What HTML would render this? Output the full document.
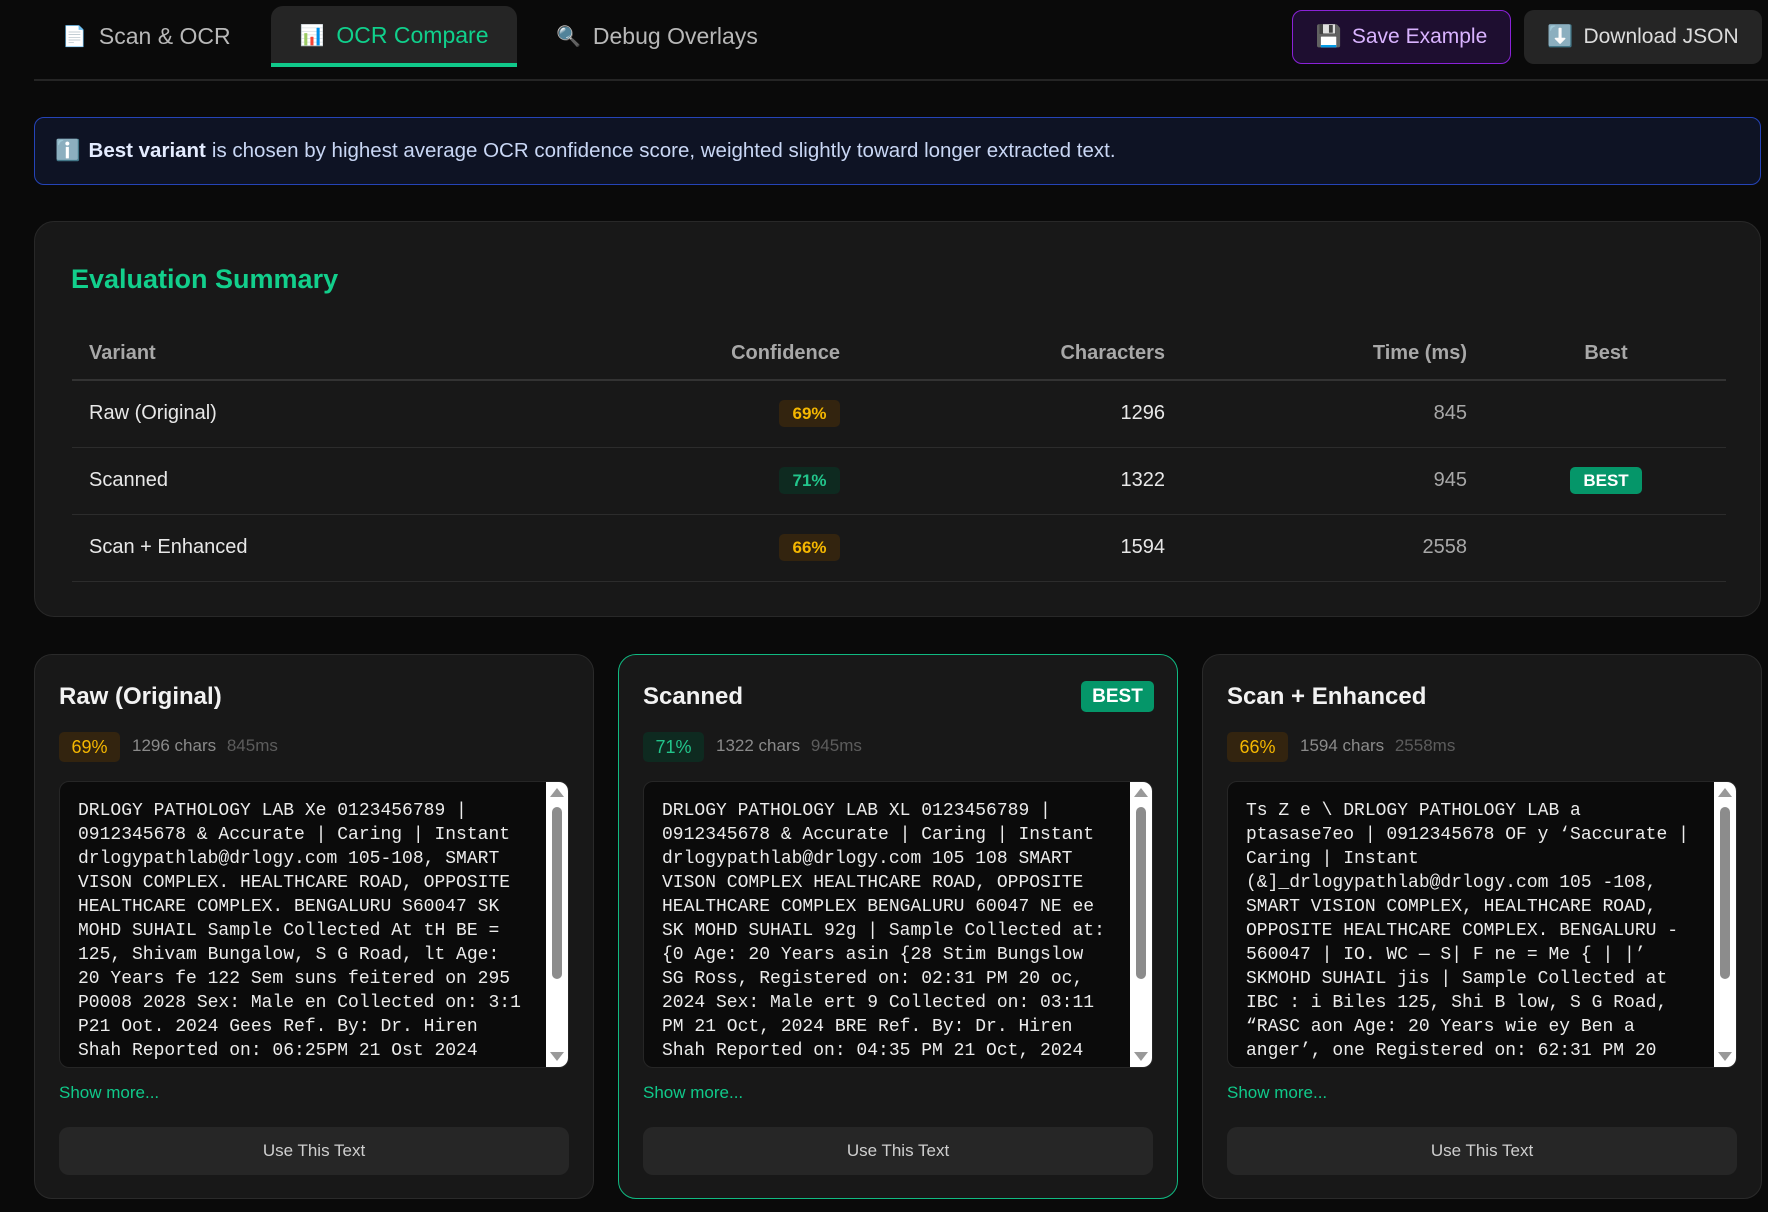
<!DOCTYPE html>
<html><head><meta charset="utf-8"><style>
*{box-sizing:border-box;margin:0;padding:0}
body{width:1768px;height:1212px;background:#0a0a0a;font-family:"Liberation Sans",sans-serif;color:#e5e5e5;position:relative;overflow:hidden}
.abs{position:absolute}
.tab{position:absolute;top:6px;height:61px;display:flex;align-items:center;font-size:23px;color:#b8b8b8}
.tab .ic{margin-right:12px;font-size:20px}
.btn{position:absolute;top:10px;height:54px;border-radius:10px;display:flex;align-items:center;justify-content:center;font-size:21px}
.card{position:absolute;top:654px;width:560px;height:545px;background:#181818;border:1px solid #2a2a2a;border-radius:18px}
.card.best{border-color:#10b981}
.ct{position:absolute;left:24px;top:28px;font-size:24px;font-weight:bold;color:#f2f2f2}
.pct{position:absolute;left:24px;top:77px;width:61px;height:30px;border-radius:5px;font-size:18px;display:flex;align-items:center;justify-content:center}
.amb{background:#33240f;color:#f5b700}
.grn{background:#0e2a20;color:#22c58b}
.meta{position:absolute;left:97px;top:81px;font-size:17px;color:#8a8a8a}
.meta span{color:#5c5c5c;margin-left:6px}
.ta{position:absolute;left:24px;top:126px;width:510px;height:287px;background:#0b0b0b;border:1px solid #262626;border-radius:10px;overflow:hidden}
.ta pre{position:absolute;left:18px;top:17px;font-family:"Liberation Mono",monospace;font-size:18px;line-height:24px;color:#ececec;white-space:pre}
.sb{position:absolute;right:0;top:0;width:22px;height:100%;background:#fff}
.sb .th{position:absolute;left:6px;top:25px;width:10px;height:172px;background:#8c8c8c;border-radius:5px}
.sb .up,.sb .dn{position:absolute;left:4px;width:0;height:0;border-left:7px solid transparent;border-right:7px solid transparent}
.sb .up{top:6px;border-bottom:9px solid #999}
.sb .dn{bottom:6px;border-top:9px solid #999}
.sm{position:absolute;left:24px;top:428px;font-size:17px;color:#10c98a}
.use{position:absolute;left:24px;top:472px;width:510px;height:48px;background:#262626;border-radius:10px;display:flex;align-items:center;justify-content:center;font-size:17px;color:#cfcfcf}
.bestb{background:#059669;color:#fff;font-weight:bold;border-radius:5px;display:flex;align-items:center;justify-content:center}
table{position:absolute;left:37px;top:106px;width:1654px;border-collapse:collapse;font-size:20px;table-layout:fixed}
th{height:52px;color:#a8a8a8;font-weight:bold;border-bottom:2px solid #333;text-align:right;padding-right:19px}
td{height:67px;border-bottom:1px solid #2c2c2c;text-align:right;color:#e8e8e8;padding-right:19px}
.tp{display:inline-block;width:61px;height:27px;line-height:27px;border-radius:5px;font-size:17px;font-weight:bold;text-align:center}
</style></head><body>

<div class="tab" style="left:62px"><span class="ic">📄</span>Scan &amp; OCR</div>
<div class="tab" style="left:271px;width:246px;background:#252525;border-radius:12px 12px 0 0;color:#10d08c;justify-content:center;border-bottom:4px solid #10c98a;padding-top:2px"><span class="ic">📊</span>OCR Compare</div>
<div class="tab" style="left:556px"><span class="ic">🔍</span>Debug Overlays</div>
<div class="abs" style="left:34px;top:79px;width:1734px;height:2px;background:#252525"></div>

<div class="btn" style="left:1292px;width:219px;background:#1e0e30;border:1.5px solid #8a22d8;color:#d9b3ff"><span style="margin-right:10px">💾</span>Save Example</div>
<div class="btn" style="left:1524px;width:238px;background:#252525;color:#dcdcdc"><span style="margin-right:10px">⬇️</span>Download JSON</div>

<div class="abs" style="left:34px;top:117px;width:1727px;height:68px;background:#0e1324;border:1.5px solid #2544b8;border-radius:10px;display:flex;align-items:center;padding-left:20px;font-size:20.5px;color:#c9d7f5"><span style="margin-right:8px">ℹ️</span><b style="color:#e4ecff;margin-right:6px">Best variant</b> is chosen by highest average OCR confidence score, weighted slightly toward longer extracted text.</div>

<div class="abs" style="left:34px;top:221px;width:1727px;height:396px;background:#181818;border:1px solid #282828;border-radius:20px">
<div class="abs" style="left:36px;top:42px;font-size:27px;font-weight:bold;color:#12cf8c">Evaluation Summary</div>
<table>
<colgroup><col style="width:640px"><col style="width:147px"><col style="width:325px"><col style="width:302px"><col style="width:240px"></colgroup>
<tr><th style="text-align:left;padding-left:17px">Variant</th><th>Confidence</th><th>Characters</th><th>Time (ms)</th><th style="text-align:center;padding:0">Best</th></tr>
<tr><td style="text-align:left;padding-left:17px">Raw (Original)</td><td><span class="tp amb">69%</span></td><td>1296</td><td style="color:#a8a8a8">845</td><td></td></tr>
<tr><td style="text-align:left;padding-left:17px">Scanned</td><td><span class="tp grn">71%</span></td><td>1322</td><td style="color:#a8a8a8">945</td><td style="text-align:center;padding:0"><span class="tp" style="background:#059669;color:#fff;width:72px">BEST</span></td></tr>
<tr><td style="text-align:left;padding-left:17px">Scan + Enhanced</td><td><span class="tp amb">66%</span></td><td>1594</td><td style="color:#a8a8a8">2558</td><td></td></tr>
</table>
</div>

<div class="card" style="left:34px">
<div class="ct">Raw (Original)</div>
<div class="pct amb">69%</div><div class="meta">1296 chars <span>845ms</span></div>
<div class="ta"><pre>DRLOGY PATHOLOGY LAB Xe 0123456789 |
0912345678 &amp; Accurate | Caring | Instant
drlogypathlab@drlogy.com 105-108, SMART
VISON COMPLEX. HEALTHCARE ROAD, OPPOSITE
HEALTHCARE COMPLEX. BENGALURU S60047 SK
MOHD SUHAIL Sample Collected At tH BE =
125, Shivam Bungalow, S G Road, lt Age:
20 Years fe 122 Sem suns feitered on 295
P0008 2028 Sex: Male en Collected on: 3:1
P21 Oot. 2024 Gees Ref. By: Dr. Hiren
Shah Reported on: 06:25PM 21 Ost 2024</pre><div class="sb"><div class="up"></div><div class="th"></div><div class="dn"></div></div></div>
<div class="sm">Show more...</div>
<div class="use">Use This Text</div>
</div>

<div class="card best" style="left:618px">
<div class="ct">Scanned</div>
<div class="bestb abs" style="left:462px;top:26px;width:73px;height:31px;font-size:19px">BEST</div>
<div class="pct grn">71%</div><div class="meta">1322 chars <span>945ms</span></div>
<div class="ta"><pre>DRLOGY PATHOLOGY LAB XL 0123456789 |
0912345678 &amp; Accurate | Caring | Instant
drlogypathlab@drlogy.com 105 108 SMART
VISON COMPLEX HEALTHCARE ROAD, OPPOSITE
HEALTHCARE COMPLEX BENGALURU 60047 NE ee
SK MOHD SUHAIL 92g | Sample Collected at:
{0 Age: 20 Years asin {28 Stim Bungslow
SG Ross, Registered on: 02:31 PM 20 oc,
2024 Sex: Male ert 9 Collected on: 03:11
PM 21 Oct, 2024 BRE Ref. By: Dr. Hiren
Shah Reported on: 04:35 PM 21 Oct, 2024</pre><div class="sb"><div class="up"></div><div class="th"></div><div class="dn"></div></div></div>
<div class="sm">Show more...</div>
<div class="use">Use This Text</div>
</div>

<div class="card" style="left:1202px">
<div class="ct">Scan + Enhanced</div>
<div class="pct amb">66%</div><div class="meta">1594 chars <span>2558ms</span></div>
<div class="ta"><pre>Ts Z e \ DRLOGY PATHOLOGY LAB a
ptasase7eo | 0912345678 OF y ‘Saccurate |
Caring | Instant
(&amp;]_drlogypathlab@drlogy.com 105 -108,
SMART VISION COMPLEX, HEALTHCARE ROAD,
OPPOSITE HEALTHCARE COMPLEX. BENGALURU -
560047 | IO. WC — S| F ne = Me { | |’
SKMOHD SUHAIL jis | Sample Collected at
IBC : i Biles 125, Shi B low, S G Road,
“RASC aon Age: 20 Years wie ey Ben a
anger’, one Registered on: 62:31 PM 20</pre><div class="sb"><div class="up"></div><div class="th"></div><div class="dn"></div></div></div>
<div class="sm">Show more...</div>
<div class="use">Use This Text</div>
</div>

</body></html>
